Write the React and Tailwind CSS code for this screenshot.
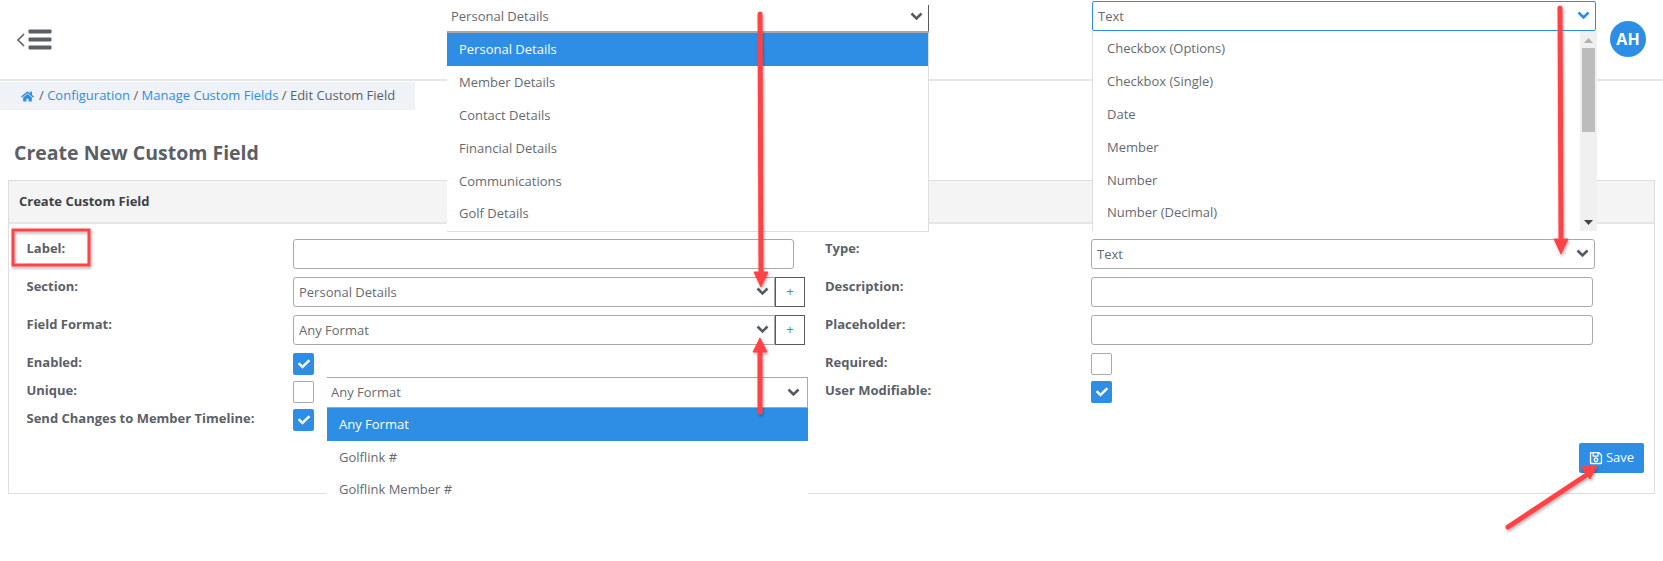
import React from "react";
import { FaHome, FaRegSave, FaCheck } from "react-icons/fa";

const font = { fontFamily: '"Open Sans", "Noto Sans", sans-serif' };

function Field({ w, children, h = "h-[30px]" }) {
  return (
    <div className={`${h} ${w} flex items-center border border-[#a9a9a9] rounded-[3px] bg-white pl-[5px] pr-[5px] pt-[1px] text-[13px] text-[#666a70]`}>
      {children}
    </div>
  );
}

function Chevron({ className = "text-[#555b62]" }) {
  return (
    <svg width="13" height="9" viewBox="0 0 13 9" className={`ml-auto -mt-[2px] ${className}`}>
      <path d="M1.5 1.5 L6.5 6.5 L11.5 1.5" fill="none" stroke="currentColor" strokeWidth="2.6" />
    </svg>
  );
}

function Check({ on }) {
  return on ? (
    <div className="w-[21px] h-[22px] rounded-[2px] bg-[#2e8ee6] flex items-center justify-center text-white">
      <FaCheck className="text-[12px]" />
    </div>
  ) : (
    <div className="w-[21px] h-[22px] rounded-[2px] border border-[#a9a9a9] bg-white" />
  );
}

function Row({ label, children, mb = "mb-2", lw = "w-[266.5px]" }) {
  return (
    <div className={`flex items-start ${mb}`}>
      <div className={`${lw} shrink-0 text-[13px] leading-[18px] font-bold text-[#5b6066]`}>{label}</div>
      {children}
    </div>
  );
}

function Plus() {
  return (
    <div className="w-[30px] h-[30px] border border-[#555b60] flex items-center justify-center text-[#2e8ee6] text-[13px] bg-white">+</div>
  );
}

function Option({ active, children, pad = "pl-[12px]" }) {
  return (
    <div className={`h-[33px] last:h-[31px] flex items-center ${pad} text-[13px] ${active ? "bg-[#2e8ee6] text-white" : "text-[#666a70]"}`}>{children}</div>
  );
}

export default function App() {
  return (
    <div className="relative w-[1663px] h-[561px] overflow-hidden bg-white" style={font}>
      <header className="h-[81px] border-b-2 border-[#e6e6e6] flex items-center justify-between pl-[16px] pr-[17px]">
        <div className="flex items-center mt-[1px]">
          <svg width="36" height="22" viewBox="0 0 36 22" className="text-[#5b6066]">
            <path d="M8 5 L2 11 L8 17" fill="none" stroke="currentColor" strokeWidth="1.6" />
            <rect x="12.5" y="0.5" width="23" height="4" rx="1" fill="currentColor" />
            <rect x="12.5" y="8.5" width="23" height="4" rx="1" fill="currentColor" />
            <rect x="12.5" y="16.5" width="23" height="4" rx="1" fill="currentColor" />
          </svg>
        </div>
        <div className="w-[36px] h-[36px] rounded-full bg-[#2e8ee6] text-white font-bold text-[16px] flex items-center justify-center -mt-[1px]">AH</div>
      </header>

      <nav className="mt-[1px] w-[415px] h-[28px] bg-[#eff3f7] flex items-center pl-[21px] text-[13px] text-[#5b6066] whitespace-pre">
        <FaHome className="text-[#2e8ee6] text-[13px] mr-[5px]" />
        <span>/ </span><span className="text-[#2e8ee6]">Configuration</span><span> / </span>
        <span className="text-[#2e8ee6]">Manage Custom Fields</span><span> / Edit Custom Field</span>
      </nav>

      <h1 className="mt-[29px] ml-[14px] h-[28px] leading-[28px] text-[19.5px] font-bold text-[#5b6066]">Create New Custom Field</h1>

      <section className="mt-[13px] ml-[8px] w-[1647px] border border-[#dedede] h-[314px]">
        <div className="h-[43px] bg-[#f4f4f4] border-b-2 border-[#e6e6e6] flex items-center pl-[10px] text-[13px] font-bold text-[#3e4247]">Create Custom Field</div>
        <div className="pt-[15px] pl-[17.5px] pr-[10px] flex">
          <div className="w-[798.5px]">
            <Row label="Label:"><Field w="w-[501px]" /></Row>
            <Row label="Section:">
              <Field w="w-[482px] rounded-r-none">Personal Details<Chevron /></Field><Plus />
            </Row>
            <Row label="Field Format:">
              <Field w="w-[482px] rounded-r-none">Any Format<Chevron /></Field><Plus />
            </Row>
            <Row label="Enabled:" mb="mb-[6px]"><Check on /></Row>
            <Row label="Unique:" mb="mb-[6px]"><Check /></Row>
            <Row label="Send Changes to Member Timeline:" mb="mb-0"><Check on /></Row>
          </div>
          <div className="flex-1">
            <Row label="Type:" lw="w-[266px]"><Field w="w-[504px]">Text<Chevron /></Field></Row>
            <Row label="Description:" lw="w-[266px]"><Field w="w-[502px]" /></Row>
            <Row label="Placeholder:" lw="w-[266px]"><Field w="w-[502px]" /></Row>
            <Row label="Required:" lw="w-[266px]" mb="mb-[6px]"><Check /></Row>
            <Row label="User Modifiable:" lw="w-[266px]" mb="mb-[12px]"><Check on /></Row>
            <div className="flex justify-end">
              <button className="w-[65px] h-[30px] mt-[28px] rounded-[2px] bg-[#2e8ee6] text-white text-[13px] flex items-center justify-center gap-[3px]">
                <FaRegSave className="text-[14px]" />Save
              </button>
            </div>
          </div>
        </div>
      </section>

      {/* Section dropdown */}
      <div className="absolute left-[447px] top-0 w-[482px]">
        <div className="h-[33px] bg-white border-b-2 border-[#a9a9a9] flex items-center pl-[4px] pr-[6px] pt-[3px] text-[13px] text-[#666a70] relative">
          Personal Details<Chevron />
          <span className="absolute right-0 top-[5px] bottom-0 w-px bg-[#555b60]" />
        </div>
        <div className="bg-white border-b border-r border-[#dedede] h-[198px] box-content">
          <Option active>Personal Details</Option>
          <Option>Member Details</Option>
          <Option>Contact Details</Option>
          <Option>Financial Details</Option>
          <Option>Communications</Option>
          <Option>Golf Details</Option>
        </div>
      </div>

      {/* Type dropdown */}
      <div className="absolute left-[1092px] top-[1px] w-[505px]">
        <div className="h-[30px] w-[504px] bg-white border border-[#2e8ee6] rounded-[2px] flex items-center pl-[5px] pr-[5px] pt-[1px] text-[13px] text-[#666a70]">
          Text<Chevron className="text-[#2e8ee6]" />
        </div>
        <div className="h-[200px] bg-white border-l border-[#dedede] flex">
          <div className="flex-1 pl-[14px] pt-[1px]">
            {["Checkbox (Options)", "Checkbox (Single)", "Date", "Member", "Number", "Number (Decimal)"].map((t) => (
              <div key={t} className="h-[33px] last:h-[31px] flex items-center text-[13px] text-[#666a70]">{t}</div>
            ))}
          </div>
          <div className="w-[17px] bg-[#f0f0f0] flex flex-col items-center">
            <svg width="9" height="6" viewBox="0 0 9 6" className="mt-[7px]"><path d="M0 5 L4.5 0 L9 5Z" fill="#b0b0b0" /></svg>
            <div className="w-[13px] h-[84px] bg-[#bcbcbc] mt-[4px]" />
            <svg width="9" height="6" viewBox="0 0 9 6" className="mt-auto mb-[5px]"><path d="M0 0 L9 0 L4.5 5Z" fill="#444" /></svg>
          </div>
        </div>
      </div>

      {/* Field format dropdown */}
      <div className="absolute left-[327px] top-[377px] w-[481px] bg-white">
        <div className="h-[31px] border-t border-r border-b border-[#a9a9a9] flex items-center pl-[4px] pr-[7px] pt-[1px] text-[13px] text-[#666a70]">
          Any Format<Chevron />
        </div>
        <Option active>Any Format</Option>
        <Option>Golflink #</Option>
        <Option>Golflink Member #</Option>
      </div>

      {/* Annotations */}
      <svg className="absolute left-0 top-0 pointer-events-none" width="1663" height="561">
        <defs>
          <filter id="sh" x="-50%" y="-50%" width="200%" height="200%">
            <feDropShadow dx="1" dy="2" stdDeviation="1.5" floodColor="#000" floodOpacity="0.3" />
          </filter>
        </defs>
        <g filter="url(#sh)" fill="#ff4245" stroke="#ff4245">
          <rect x="13" y="230" width="76" height="35" fill="none" strokeWidth="3" />
          <path d="M760 14 L761 275" strokeWidth="5" strokeLinecap="round" fill="none" />
          <path d="M754 272 L768 272 L761 287Z" strokeWidth="1" />
          <path d="M760 412 L760 350" strokeWidth="5" strokeLinecap="round" fill="none" />
          <path d="M753 352 L767 352 L760 338Z" strokeWidth="1" />
          <path d="M1560 8 L1561 240" strokeWidth="5" strokeLinecap="round" fill="none" />
          <path d="M1554 239 L1568 239 L1561 254Z" strokeWidth="1" />
          <path d="M1508 527 L1588 474" strokeWidth="5" strokeLinecap="round" fill="none" />
          <path d="M1597 466 L1581 467 L1590 479Z" strokeWidth="1" />
        </g>
      </svg>
    </div>
  );
}
